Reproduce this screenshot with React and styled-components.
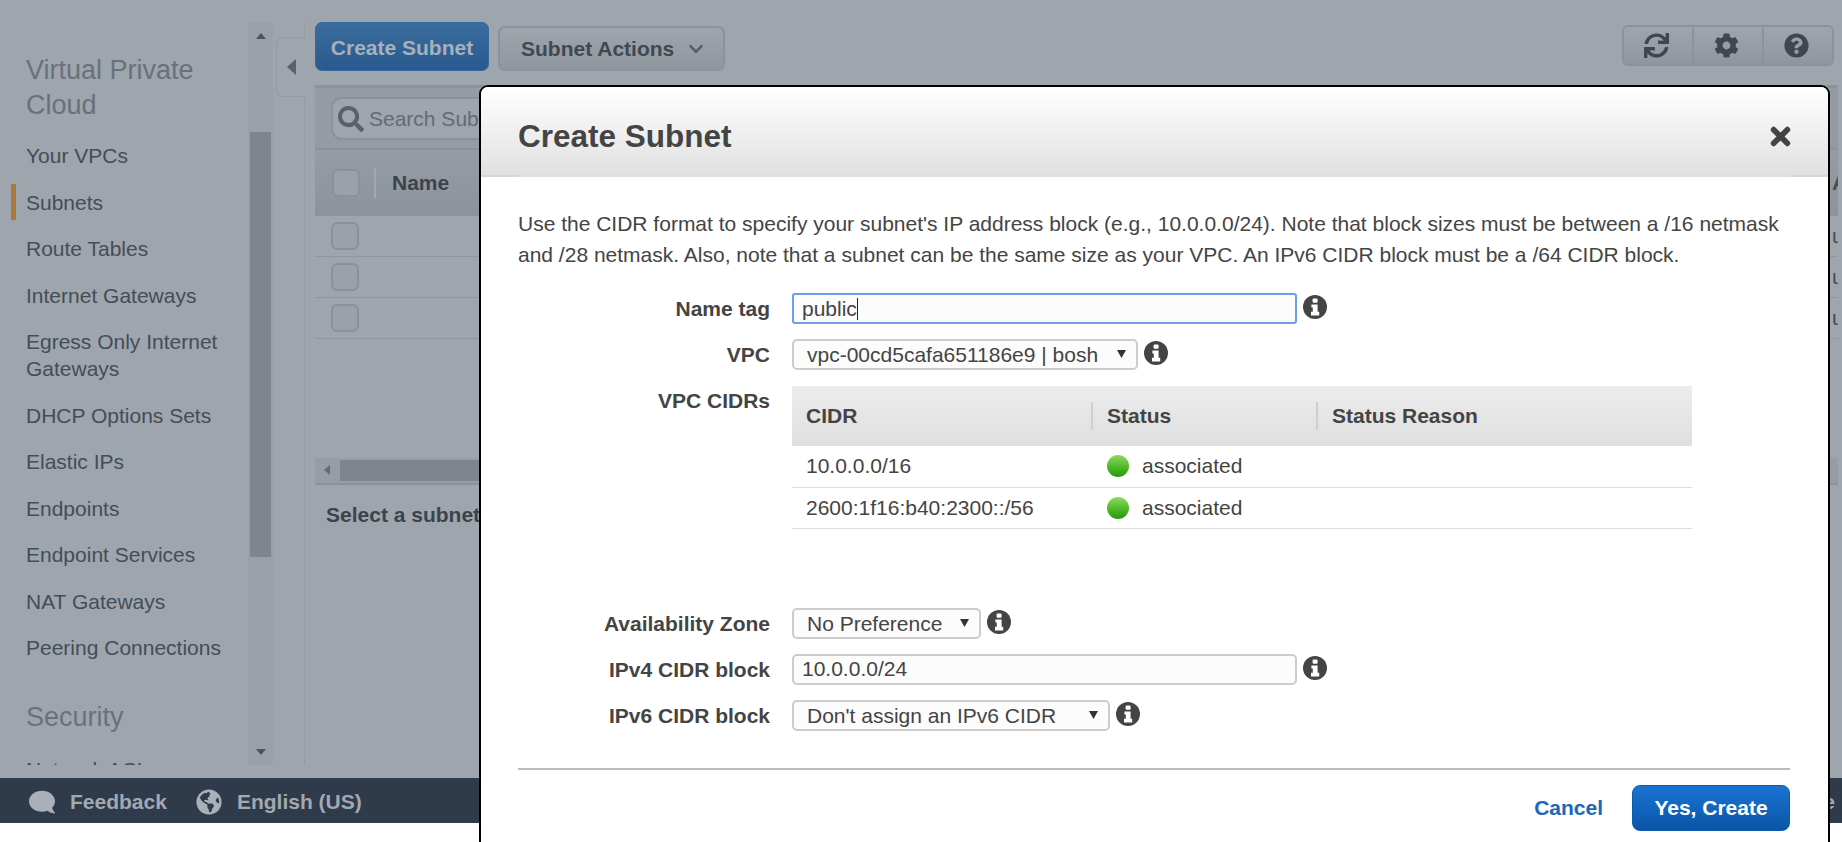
import React from "react";
import styled, { createGlobalStyle } from "styled-components";
import {
  FaSync,
  FaCog,
  FaQuestionCircle,
  FaSearch,
  FaComment,
  FaGlobeAmericas,
  FaChevronDown,
} from "react-icons/fa";

const navGroups = [
  {
    title: "Virtual Private Cloud",
    items: [
      "Your VPCs",
      "Subnets",
      "Route Tables",
      "Internet Gateways",
      "Egress Only Internet Gateways",
      "DHCP Options Sets",
      "Elastic IPs",
      "Endpoints",
      "Endpoint Services",
      "NAT Gateways",
      "Peering Connections",
    ],
  },
  { title: "Security", items: ["Network ACLs"] },
];

const cidrs = ["10.0.0.0/16", "2600:1f16:b40:2300::/56"];

const InfoIcon = () => (
  <InfoSvg viewBox="0 0 24 24">
    <circle cx="12" cy="12" r="12" fill="#444" />
    <rect x="9.6" y="3.4" width="5" height="4.4" rx="1" fill="#fff" />
    <path d="M8.4 9.4H14.6V16.8H16.2V20.4H8V16.8H9.8V12.6H8.4Z" fill="#fff" />
  </InfoSvg>
);

const CloseIcon = () => (
  <CloseSvg viewBox="0 0 20 20">
    <path d="M3.5 3.5L16.5 16.5M16.5 3.5L3.5 16.5" />
  </CloseSvg>
);

const App = () => {
  return (
    <Page>
      <GlobalStyle />
      <Console>
        <Workspace>
          <Sidebar>
            {navGroups.map((group) => (
              <div key={group.title}>
                <NavTitle>{group.title}</NavTitle>
                {group.items.map((item) => (
                  <NavItem key={item} $active={item === "Subnets"}>
                    {item}
                  </NavItem>
                ))}
              </div>
            ))}
          </Sidebar>
          <SideScroll>
            <ArrowUp />
            <SideThumb />
            <ArrowDown />
          </SideScroll>
          <CollapseRail>
            <CollapseTab>
              <ArrowLeft />
            </CollapseTab>
          </CollapseRail>

          <Content>
            <Toolbar>
              <ToolbarLeft>
                <PrimaryButton>Create Subnet</PrimaryButton>
                <ActionsButton>
                  Subnet Actions
                  <FaChevronDown />
                </ActionsButton>
              </ToolbarLeft>
              <IconGroup>
                <IconCell>
                  <FaSync />
                </IconCell>
                <IconCell>
                  <FaCog />
                </IconCell>
                <IconCell>
                  <FaQuestionCircle />
                </IconCell>
              </IconGroup>
            </Toolbar>

            <FilterBar>
              <SearchBox>
                <FaSearch />
                Search Subnets and their properties
              </SearchBox>
            </FilterBar>

            <ListArea>
              <ListHead>
                <HeadStart>
                  <Check />
                  <HeadDivider />
                  <HeadName>Name</HeadName>
                </HeadStart>
                <CutCell $bold>Availability Zone</CutCell>
              </ListHead>
              {[0, 1, 2].map((i) => (
                <ListRow key={i}>
                  <Check />
                  <CutCell>us-east-2a</CutCell>
                </ListRow>
              ))}
            </ListArea>

            <HScroll>
              <ArrowLeftSmall />
              <HThumb />
            </HScroll>
            <SelectHint>Select a subnet above</SelectHint>
          </Content>
        </Workspace>

        <Footer>
          <FooterGroup>
            <FeedbackIcon />
            Feedback
          </FooterGroup>
          <FooterGroup>
            <FaGlobeAmericas />
            English (US)
          </FooterGroup>
          <FooterEnd>Terms of Use</FooterEnd>
        </Footer>
      </Console>

      <Modal>
        <ModalHeader>
          <ModalTitle>Create Subnet</ModalTitle>
          <CloseIcon />
        </ModalHeader>
        <ModalBody>
          <Intro>
            Use the CIDR format to specify your subnet's IP address block (e.g.,
            10.0.0.0/24). Note that block sizes must be between a /16 netmask
            and /28 netmask. Also, note that a subnet can be the same size as
            your VPC. An IPv6 CIDR block must be a /64 CIDR block.
          </Intro>

          <FormRow>
            <FieldLabel>Name tag</FieldLabel>
            <Control>
              <Field $focused>
                public
                <Caret />
              </Field>
              <InfoIcon />
            </Control>
          </FormRow>

          <FormRow>
            <FieldLabel>VPC</FieldLabel>
            <Control>
              <Select $width={346}>
                <option>vpc-00cd5cafa651186e9 | bosh</option>
              </Select>
              <InfoIcon />
            </Control>
          </FormRow>

          <FormRow $gap={79}>
            <FieldLabel>VPC CIDRs</FieldLabel>
            <CidrTable>
              <colgroup>
                <col width="299" />
                <col width="225" />
                <col />
              </colgroup>
              <thead>
                <tr>
                  <CidrHead $pad={14}>CIDR</CidrHead>
                  <CidrHead $divider>Status</CidrHead>
                  <CidrHead $divider>Status Reason</CidrHead>
                </tr>
              </thead>
              <tbody>
                {cidrs.map((cidr) => (
                  <tr key={cidr}>
                    <CidrCell $pad={14}>{cidr}</CidrCell>
                    <CidrCell>
                      <StatusWrap>
                        <StatusDot />
                        associated
                      </StatusWrap>
                    </CidrCell>
                    <CidrCell />
                  </tr>
                ))}
              </tbody>
            </CidrTable>
          </FormRow>

          <FormRow>
            <FieldLabel>Availability Zone</FieldLabel>
            <Control>
              <Select $width={189}>
                <option>No Preference</option>
              </Select>
              <InfoIcon />
            </Control>
          </FormRow>

          <FormRow>
            <FieldLabel>IPv4 CIDR block</FieldLabel>
            <Control>
              <Field>10.0.0.0/24</Field>
              <InfoIcon />
            </Control>
          </FormRow>

          <FormRow $gap={0}>
            <FieldLabel>IPv6 CIDR block</FieldLabel>
            <Control>
              <Select $width={318}>
                <option>Don't assign an IPv6 CIDR</option>
              </Select>
              <InfoIcon />
            </Control>
          </FormRow>

          <Divider />

          <ModalActions>
            <CancelLink>Cancel</CancelLink>
            <ConfirmButton>Yes, Create</ConfirmButton>
          </ModalActions>
        </ModalBody>
      </Modal>
    </Page>
  );
};

export default App;

const selectArrow =
  "url(\"data:image/svg+xml,%3Csvg xmlns='http://www.w3.org/2000/svg' width='9' height='8'%3E%3Cpath d='M0 0H9L4.5 8Z' fill='%23333'/%3E%3C/svg%3E\")";

const GlobalStyle = createGlobalStyle`
  html, body {
    margin: 0;
    padding: 0;
    background: #fff;
  }
  * {
    box-sizing: border-box;
  }
  body {
    font-family: "Liberation Sans", Arial, sans-serif;
    font-size: 21px;
  }
`;

const Page = styled.div`
  position: relative;
  width: 1842px;
  height: 842px;
  overflow: hidden;
  background: #fff;
`;

const Console = styled.div`
  height: 823px;
  background: #9ea5ad;
  display: flex;
  flex-direction: column;
`;

const Workspace = styled.div`
  height: 778px;
  padding: 22px 0 13px;
  display: flex;
`;

const Sidebar = styled.nav`
  width: 248px;
  padding: 31px 0 0 26px;
  overflow: hidden;
`;

const NavTitle = styled.h3`
  margin: 0 0 9.5px;
  font-size: 27px;
  line-height: 35px;
  font-weight: 400;
  color: #69717b;
  div + div > & {
    margin-top: 29px;
    margin-bottom: 11px;
  }
`;

const NavItem = styled.a`
  position: relative;
  display: block;
  padding: 9.75px 20px 9.75px 0;
  font-size: 21px;
  line-height: 27px;
  color: #454d57;
  &::before {
    content: "";
    display: ${(p) => (p.$active ? "block" : "none")};
    position: absolute;
    left: -15px;
    top: 5px;
    width: 5px;
    height: 36px;
    background: #a97a3b;
  }
`;

const SideScroll = styled.div`
  width: 25px;
  background: #99a0a8;
  display: flex;
  flex-direction: column;
  align-items: center;
`;

const SideThumb = styled.div`
  width: 21px;
  height: 425px;
  margin-top: 77px;
  background: #7e858e;
`;

const ArrowUp = styled.span`
  margin-top: 11px;
  border: 5.5px solid transparent;
  border-top: 0;
  border-bottom: 6px solid #4c535c;
  width: 0;
  height: 0;
  margin-bottom: 16px;
`;

const ArrowDown = styled.span`
  margin-top: auto;
  margin-bottom: 10px;
  border: 5.5px solid transparent;
  border-bottom: 0;
  border-top: 6px solid #4c535c;
  width: 0;
  height: 0;
`;

const CollapseRail = styled.div`
  width: 32px;
  margin-right: 10px;
  border-right: 1px solid #949ba3;
`;

const CollapseTab = styled.div`
  width: 30px;
  height: 60px;
  margin: 15px 0 0 3px;
  background: #9ea5ad;
  border: 1px solid #949ba3;
  border-right: 0;
  border-radius: 7px 0 0 7px;
  display: flex;
  align-items: center;
  padding-left: 10px;
`;

const ArrowLeft = styled.span`
  width: 0;
  height: 0;
  border: 8.5px solid transparent;
  border-left: 0;
  border-right: 9px solid #5a616a;
`;

const Content = styled.main`
  width: 1523px;
  overflow: hidden;
  display: flex;
  flex-direction: column;
`;

const Toolbar = styled.div`
  height: 63px;
  display: flex;
  justify-content: space-between;
  align-items: flex-start;
`;

const ToolbarLeft = styled.div`
  height: 49px;
  display: flex;
  align-items: flex-end;
  gap: 9px;
`;

const PrimaryButton = styled.button`
  width: 174px;
  height: 49px;
  padding: 2px 0 0;
  border: 1px solid #33679d;
  border-radius: 7px;
  background: linear-gradient(#3b6c9e, #2a5a8d);
  font: bold 21px "Liberation Sans", Arial, sans-serif;
  color: #a6b1bc;
`;

const ActionsButton = styled.button`
  width: 227px;
  height: 45px;
  padding: 0 0 0 21px;
  border: 2px solid #8b929a;
  border-radius: 7px;
  background: linear-gradient(#9ea5ad, #8f969e);
  display: flex;
  align-items: center;
  gap: 14px;
  font: bold 21px "Liberation Sans", Arial, sans-serif;
  color: #414851;
  svg {
    width: 16px;
    height: 16px;
    color: #555c65;
  }
`;

const IconGroup = styled.div`
  margin-top: 3px;
  margin-right: 4px;
  width: 212px;
  height: 41px;
  display: flex;
  border: 2px solid #8b929a;
  border-radius: 6px;
  background: linear-gradient(#9ea5ad, #8f969e);
`;

const IconCell = styled.div`
  flex: 1;
  padding-right: 3px;
  display: flex;
  align-items: center;
  justify-content: center;
  color: #3f4650;
  font-size: 25px;
  & + & {
    border-left: 2px solid #8b929a;
  }
`;

const FilterBar = styled.div`
  height: 65px;
  padding: 9px 0 0 16px;
  background: #949ba3;
  border-top: 3px solid #8b929a;
  border-bottom: 2px solid #8b929a;
`;

const SearchBox = styled.div`
  width: 560px;
  height: 43px;
  padding-left: 5px;
  display: flex;
  align-items: center;
  gap: 5px;
  border: 2px solid #8b929a;
  border-radius: 11px;
  background: #9ea5ad;
  font-size: 21px;
  color: #636b75;
  white-space: nowrap;
  svg {
    width: 26px;
    height: 26px;
    color: #59606a;
  }
`;

const ListArea = styled.div`
  height: 308px;
`;

const ListHead = styled.div`
  height: 66px;
  display: flex;
  align-items: center;
  justify-content: space-between;
  background: linear-gradient(#959ca4, #8c939b);
  padding-left: 17px;
`;

const HeadStart = styled.div`
  display: flex;
  align-items: center;
`;

const HeadDivider = styled.span`
  width: 2px;
  height: 30px;
  margin: 0 16px 0 14px;
  background: #a2a8b0;
`;

const HeadName = styled.span`
  font-size: 21px;
  font-weight: 700;
  color: #3c434c;
`;

const ListRow = styled.div`
  height: 41px;
  display: flex;
  align-items: center;
  justify-content: space-between;
  padding-left: 16px;
  border-bottom: 1px solid #8f969e;
`;

const Check = styled.span`
  display: block;
  width: 28px;
  height: 28px;
  border: 2px solid #8a9199;
  border-radius: 6px;
  background: #9aa1a9;
`;

const CutCell = styled.span`
  width: 6px;
  white-space: nowrap;
  font-size: 21px;
  font-weight: ${(p) => (p.$bold ? 700 : 400)};
  color: #454d57;
`;

const HScroll = styled.div`
  height: 27px;
  padding-left: 9px;
  display: flex;
  align-items: flex-start;
  background: #969da5;
  border-bottom: 2px solid #8b929a;
`;

const ArrowLeftSmall = styled.span`
  width: 0;
  height: 0;
  margin-top: 7px;
  border: 5.5px solid transparent;
  border-left: 0;
  border-right: 6px solid #646b74;
`;

const HThumb = styled.div`
  width: 900px;
  height: 21px;
  margin: 2px 0 0 10px;
  background: #7e858e;
`;

const SelectHint = styled.div`
  margin: 16px 0 0 11px;
  font-size: 21px;
  line-height: 27px;
  font-weight: 700;
  color: #3c434c;
  white-space: nowrap;
`;

const Footer = styled.footer`
  height: 45px;
  padding: 2px 0 0 29px;
  display: flex;
  align-items: center;
  gap: 29px;
  background: #2f3a4a;
  font-size: 21px;
  font-weight: 700;
  color: #a1a9b3;
`;

const FooterGroup = styled.div`
  display: flex;
  align-items: center;
  gap: 15px;
  svg {
    width: 26px;
    height: 26px;
    color: #a9b0b9;
  }
`;

const FeedbackIcon = styled(FaComment)`
  transform: scaleX(-1);
`;

const FooterEnd = styled.span`
  margin-left: auto;
  padding-right: 7px;
`;

const Modal = styled.div`
  position: absolute;
  left: 479px;
  top: 85px;
  width: 1351px;
  height: 800px;
  background: #fff;
  border: 2px solid #000;
  border-radius: 9px 9px 0 0;
  overflow: hidden;
`;

const ModalHeader = styled.header`
  position: relative;
  height: 90px;
  padding: 8px 37px 0 37px;
  display: flex;
  align-items: center;
  justify-content: space-between;
  background: linear-gradient(#fff, #e0e0e0);
  color: #444;
  &::before,
  &::after {
    content: "";
    position: absolute;
    bottom: 0;
    width: 38px;
    height: 2px;
    background: #d6d6d6;
  }
  &::before {
    left: 0;
  }
  &::after {
    right: 0;
  }
`;

const CloseSvg = styled.svg`
  width: 21px;
  height: 21px;
  fill: none;
  stroke: #444;
  stroke-width: 5.5;
  stroke-linecap: round;
`;

const ModalTitle = styled.h2`
  margin: 0;
  font-size: 31.5px;
  font-weight: 700;
  color: #444;
`;

const ModalBody = styled.div`
  padding: 31px 38px 0 37px;
`;

const Intro = styled.p`
  margin: 0 0 23px;
  font-size: 21px;
  line-height: 31px;
  color: #444;
`;

const FormRow = styled.div`
  display: grid;
  grid-template-columns: 252px 1fr;
  column-gap: 22px;
  margin-bottom: ${(p) => (p.$gap !== undefined ? p.$gap : 15)}px;
`;

const FieldLabel = styled.label`
  text-align: right;
  font-size: 21px;
  line-height: 31px;
  font-weight: 700;
  color: #444;
`;

const Control = styled.div`
  display: flex;
  align-items: center;
  gap: 6px;
`;

const Field = styled.div`
  width: 505px;
  height: 31px;
  padding-left: 8px;
  display: flex;
  align-items: center;
  border: 2px solid ${(p) => (p.$focused ? "#6d9eeb" : "#ccc")};
  border-radius: ${(p) => (p.$focused ? "3px" : "5px")};
  background: #fcfcfc;
  font-size: 21px;
  color: #444;
`;

const Caret = styled.span`
  width: 1px;
  height: 22px;
  background: #222;
`;

const Select = styled.select`
  appearance: none;
  width: ${(p) => p.$width}px;
  height: 31px;
  padding: 0 0 0 13px;
  border: 2px solid #ccc;
  border-radius: 5px;
  background: #fcfcfc ${selectArrow} no-repeat right 10px top 9px;
  font: 21px "Liberation Sans", Arial, sans-serif;
  color: #444;
`;

const InfoSvg = styled.svg`
  flex: none;
  width: 24px;
  height: 24px;
  margin-top: -3px;
`;

const CidrTable = styled.table`
  width: 900px;
  margin-top: 1px;
  table-layout: fixed;
  border-collapse: collapse;
  color: #444;
  font-size: 21px;
`;

const CidrHead = styled.th`
  position: relative;
  height: 60px;
  padding: 0 0 0 ${(p) => p.$pad || 16}px;
  text-align: left;
  font-weight: 700;
  background: linear-gradient(#ececec, #dfdfdf);
  &::before {
    content: "";
    display: ${(p) => (p.$divider ? "block" : "none")};
    position: absolute;
    left: 0;
    top: 16px;
    width: 2px;
    height: 28px;
    background: #cfcfcf;
  }
`;

const CidrCell = styled.td`
  height: 41px;
  padding: 0 0 0 ${(p) => p.$pad || 16}px;
  border-bottom: 1px solid #ddd;
`;

const StatusWrap = styled.span`
  display: flex;
  align-items: center;
  gap: 13px;
`;

const StatusDot = styled.span`
  width: 22px;
  height: 22px;
  border-radius: 50%;
  background: linear-gradient(#8edb5e, #3fae1c 70%, #2c9412);
`;

const Divider = styled.hr`
  height: 2px;
  margin: 37px 0 0;
  border: 0;
  background: #bbb;
`;

const ModalActions = styled.div`
  margin-top: 15px;
  display: flex;
  align-items: center;
  justify-content: flex-end;
  gap: 29px;
`;

const CancelLink = styled.a`
  font-size: 21px;
  font-weight: 700;
  color: #1a68b8;
`;

const ConfirmButton = styled.button`
  width: 158px;
  height: 46px;
  padding: 0;
  border: 1px solid #0b5cab;
  border-radius: 8px;
  background: linear-gradient(#1a74d2, #0a55a8);
  font: bold 21px "Liberation Sans", Arial, sans-serif;
  color: #fff;
`;
